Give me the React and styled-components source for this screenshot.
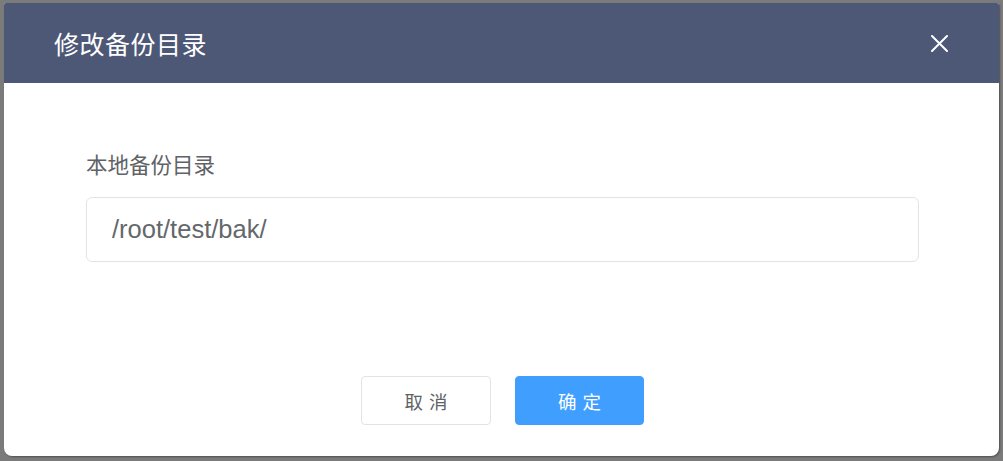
import React from "react";
import styled, { createGlobalStyle } from "styled-components";

const Global = createGlobalStyle`
  html, body { margin: 0; padding: 0; }
  body {
    background: #7b7b7b;
    font-family: "Liberation Sans", "Noto Sans CJK SC", sans-serif;
    overflow: hidden;
  }
`;

const Page = styled.div`
  width: 1003px;
  height: 461px;
  padding: 3px 4px 5px 4px;
  box-sizing: border-box;
`;

const Dialog = styled.div`
  width: 995px;
  height: 453px;
  background: #fff;
  border-radius: 2px 2px 8px 8px;
  box-shadow: 1px 1px 2px rgba(0, 0, 0, 0.35);
  display: flex;
  flex-direction: column;
  overflow: hidden;
`;

const Header = styled.div`
  height: 80px;
  background: #4d5776;
  display: flex;
  align-items: center;
  justify-content: space-between;
  padding: 0 50px 0 50px;
  box-sizing: border-box;
  flex-shrink: 0;
`;

const Title = styled.h2`
  margin: 0;
  font-size: 25px;
  font-weight: 400;
  color: #fff;
  letter-spacing: 0.5px;
  font-family: "Noto Sans CJK SC", sans-serif;
`;

const CloseButton = styled.button`
  border: 0;
  background: transparent;
  padding: 0;
  width: 20px;
  height: 20px;
  display: flex;
  align-items: center;
  justify-content: center;
  cursor: pointer;
`;

const Body = styled.div`
  flex: 1;
  padding: 66px 80px 0 82px;
  display: flex;
  flex-direction: column;
`;

const Label = styled.label`
  font-family: "Noto Sans CJK SC", sans-serif;
  font-size: 21.5px;
  color: #606266;
  line-height: 30px;
  margin-bottom: 18px;
`;

const Input = styled.input`
  box-sizing: border-box;
  width: 833px;
  height: 65px;
  border: 1px solid #e2e3ea;
  border-radius: 6px;
  padding: 0 25px;
  font-family: "Liberation Sans", "Noto Sans CJK SC", sans-serif;
  font-size: 25.5px;
  color: #64676b;
  outline: none;
`;

const Footer = styled.div`
  display: flex;
  justify-content: center;
  gap: 24px;
  padding: 0 0 31px 2px;
`;

const Button = styled.button`
  width: ${(p) => (p.$primary ? "129px" : "130px")};
  height: 49px;
  box-sizing: border-box;
  border-radius: 4px;
  border: 1px solid ${(p) => (p.$primary ? "#409eff" : "#e2e3ea")};
  background: ${(p) => (p.$primary ? "#409eff" : "#fff")};
  color: ${(p) => (p.$primary ? "#fff" : "#606266")};
  font-family: "Noto Sans CJK SC", sans-serif;
  font-size: 18.5px;
  letter-spacing: 6px;
  padding: 0 0 0 6px;
  cursor: pointer;
`;

export default function App() {
  return (
    <>
      <Global />
      <Page>
        <Dialog>
          <Header>
            <Title>修改备份目录</Title>
            <CloseButton aria-label="关闭">
              <svg width="17" height="17" viewBox="0 0 17 17">
                <path d="M1 1 L16 16 M16 1 L1 16" stroke="#fff" strokeWidth="2" strokeLinecap="round" />
              </svg>
            </CloseButton>
          </Header>
          <Body>
            <Label>本地备份目录</Label>
            <Input defaultValue="/root/test/bak/" />
          </Body>
          <Footer>
            <Button>取消</Button>
            <Button $primary>确定</Button>
          </Footer>
        </Dialog>
      </Page>
    </>
  );
}
